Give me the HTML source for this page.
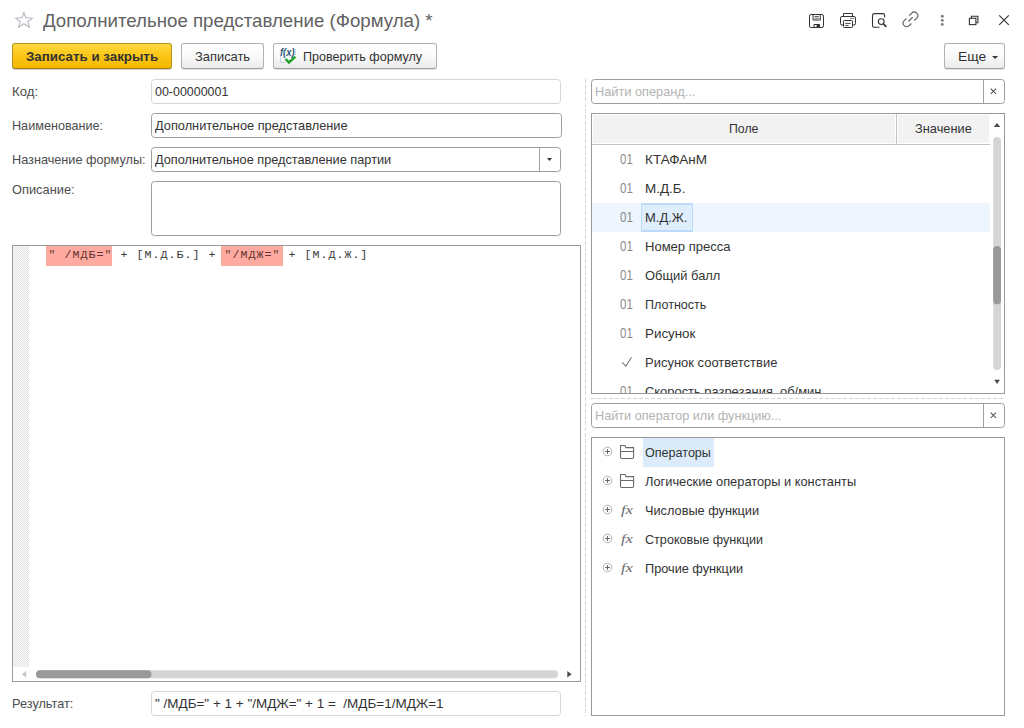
<!DOCTYPE html>
<html lang="ru">
<head>
<meta charset="utf-8">
<title>Дополнительное представление (Формула) *</title>
<style>
*{box-sizing:border-box;margin:0;padding:0}
html,body{width:1024px;height:728px;overflow:hidden;background:#fff}
body{font-family:"Liberation Sans",Arial,sans-serif;font-size:13px;color:#333;position:relative}
.abs{position:absolute}
.tx{position:absolute;white-space:pre;line-height:16px;height:16px;transform-origin:0 50%}
.btn{position:absolute;top:43px;height:26px;border:1px solid #b2b2b2;border-bottom-color:#9c9c9c;border-radius:3px;background:linear-gradient(#ffffff,#fafafa 50%,#eaeaea);box-shadow:0 1px 0.5px rgba(0,0,0,.10)}
.btn.y{background:linear-gradient(#ffd941,#fbc515 50%,#f5b700);border-color:#b8921e;border-bottom-color:#a07c14;box-shadow:0 1px 0.5px rgba(0,0,0,.18)}
.inp{position:absolute;border:1px solid #9e9e9e;border-radius:3.5px;background:#fff}
.inp.ro{border-color:#d6d6d6}
.box{position:absolute;border:1px solid #a0a0a0;background:#fff;overflow:hidden}
.mono{font-family:"Liberation Mono","Courier New",monospace}
</style>
</head>
<body>
<!-- window title -->
<svg class="abs" style="left:14px;top:10px" width="20" height="20" viewBox="0 0 20 20"><path d="M9.9 2.5 L11.8 7.5 L18.3 8.3 L13.8 11.8 L15.6 17.3 L9.9 13.7 L4.5 17.3 L6.2 11.8 L1.8 8.3 L8.1 7.5 Z" fill="none" stroke="#b3b9bf" stroke-width="1.05" stroke-linejoin="miter"/></svg>
<span class="tx" style="left:42.5px;top:13.0px;font-size:18.67px;color:#626262;transform:scaleX(1.0009)">Дополнительное представление (Формула) *</span>

<!-- window buttons -->
<svg class="abs" style="left:800px;top:4px" width="224" height="32" viewBox="0 0 224 32" fill="none" stroke="#333" stroke-width="1.1">
 <!-- save -->
 <g stroke-width="1">
  <rect x="9.5" y="10.5" width="14" height="13" rx="1.6"/>
  <path d="M13 10.5 V16 H20.3 V10.5"/>
  <path d="M14.5 12.5 H18.8 M14.5 14.2 H18.8" stroke-width="0.8"/>
  <path d="M14 23.5 V20.5 H19.6 V23.5"/>
  <rect x="16.6" y="21" width="2.6" height="2.5" fill="#333" stroke="none"/>
 </g>
 <!-- print -->
 <g stroke-width="1">
  <path d="M43.5 12.5 V9.5 H52.5 V12.5"/>
  <path d="M43.5 21 H42 Q40.5 21 40.5 19.5 V14 Q40.5 12.5 42 12.5 H54 Q55.5 12.5 55.5 14 V19.5 Q55.5 21 54 21 H52.5"/>
  <rect x="43.5" y="16.5" width="9" height="7" rx="0.8" fill="#fff"/>
  <path d="M45.3 19.4 H50.6 M45.3 21.5 H48.5 M50.2 14.5 H51.6 M52.4 14.5 H53.8" stroke-width="0.9"/>
 </g>
 <!-- preview -->
 <g>
  <path d="M84.6 13.5 V11.3 Q84.6 9.6 82.9 9.6 H74.2 Q72.5 9.6 72.5 11.3 V21.6 Q72.5 23.3 74.2 23.3 H79.5"/>
  <circle cx="81.2" cy="17.6" r="2.9"/>
  <path d="M83.4 19.9 L86.3 22.8" stroke-width="1.7"/>
 </g>
</svg>
<svg class="abs" style="left:895px;top:4px" width="129" height="32" viewBox="0 0 129 32" fill="none" stroke="#333" stroke-width="1.1">
 <!-- link -->
 <g stroke="#5a5a5a" stroke-width="1.1">
  <path d="M14.3 11.5 L16.74 9.14 A3.55 3.55 0 0 1 21.76 14.16 L19.35 16.5"/>
  <path d="M11.4 14.5 L9.14 16.54 A3.55 3.55 0 0 0 14.16 21.56 L16.3 19.5"/>
  <path d="M13.4 17.5 L17.66 13.06"/>
 </g>
 <!-- dots -->
 <g fill="#7f7f7f" stroke="none"><circle cx="47.3" cy="12.3" r="1.45"/><circle cx="47.3" cy="16.4" r="1.45"/><circle cx="47.3" cy="20.4" r="1.45"/></g>
 <!-- restore -->
 <g stroke-width="1.1"><path d="M76.4 14.1 V12.3 H82.9 V18.8 H81.1"/><rect x="74.4" y="14.3" width="6.5" height="6.3"/></g>
 <!-- close -->
 <path d="M104.2 11.3 L113.8 20.9 M113.8 11.3 L104.2 20.9" stroke-width="1.15"/>
</svg>

<!-- toolbar -->
<div class="btn y" style="left:12px;width:160px"></div><span class="tx" style="left:25.5px;top:49.0px;font-size:13.5px;color:#333;transform:scaleX(0.9873);font-weight:bold">Записать и закрыть</span>
<div class="btn" style="left:181px;width:83px"></div><span class="tx" style="left:194.5px;top:49.0px;font-size:13.5px;color:#333;transform:scaleX(0.9549)">Записать</span>
<div class="btn" style="left:273px;width:164px"></div><span class="tx" style="left:303.0px;top:49.0px;font-size:13.5px;color:#333;transform:scaleX(0.9312)">Проверить формулу</span>
<svg class="abs" style="left:279px;top:47px" width="19" height="18" viewBox="0 0 19 18">
 <path d="M1.5 9.5 V15.5 H6.5 M16.5 2.5 V8" fill="none" stroke="#9db3c8" stroke-width="1" stroke-dasharray="1 1.2"/>
 <text x="1" y="8.6" font-family="Liberation Sans, Arial, sans-serif" font-size="10" font-weight="bold" font-style="italic" fill="#2f587a" textLength="14.6" lengthAdjust="spacingAndGlyphs">f(x)</text>
 <path d="M6.6 12 L9.9 15.4 L16.4 9.6" fill="none" stroke="#22a02e" stroke-width="2.5" stroke-linecap="butt" stroke-linejoin="miter"/>
</svg>
<div class="btn" style="left:944px;width:61px"></div><span class="tx" style="left:957.9px;top:49.0px;font-size:13.5px;color:#333;transform:scaleX(1.0266)">Еще</span>
<svg class="abs" style="left:991px;top:55px" width="8" height="5" viewBox="0 0 8 5"><path d="M1 1 H7.2 L4.1 4.1 Z" fill="#3c3c3c"/></svg>

<!-- left fields -->
<span class="tx" style="left:12.0px;top:83.5px;font-size:13.5px;color:#4d4d4d;transform:scaleX(0.9768)">Код:</span><div class="inp ro" style="left:151px;top:79px;width:410px;height:25px"></div><span class="tx" style="left:154.8px;top:83.5px;font-size:13.5px;color:#333;transform:scaleX(0.9211)">00-00000001</span>
<span class="tx" style="left:12.0px;top:117.5px;font-size:13.5px;color:#4d4d4d;transform:scaleX(0.9359)">Наименование:</span><div class="inp" style="left:151px;top:113px;width:411px;height:25px"></div><span class="tx" style="left:154.5px;top:117.5px;font-size:13.5px;color:#333;transform:scaleX(0.9470)">Дополнительное представление</span>
<span class="tx" style="left:12.0px;top:151.5px;font-size:13.5px;color:#4d4d4d;transform:scaleX(0.9401)">Назначение формулы:</span><div class="inp" style="left:151px;top:147px;width:410px;height:25px"></div><span class="tx" style="left:154.5px;top:151.5px;font-size:13.5px;color:#333;transform:scaleX(0.9432)">Дополнительное представление партии</span>
<div class="abs" style="left:539px;top:148px;width:1px;height:23px;background:#a0a0a0"></div>
<svg class="abs" style="left:546px;top:157px" width="8" height="5" viewBox="0 0 8 5"><path d="M0.9 1 H6.1 L3.5 4 Z" fill="#3c3c3c"/></svg>
<span class="tx" style="left:12.0px;top:181.5px;font-size:13.5px;color:#4d4d4d;transform:scaleX(0.9503)">Описание:</span><div class="inp" style="left:151px;top:181px;width:410px;height:55px"></div>

<!-- formula editor -->
<div class="box" style="left:12px;top:245px;width:569px;height:437px;border-color:#9a9a9a">
 <svg class="abs" style="left:0;top:0" width="16" height="421"><defs><pattern id="ck" width="2" height="2" patternUnits="userSpaceOnUse"><rect width="2" height="2" fill="#fff"/><rect x="1" width="1" height="1" fill="#dfdfdf"/><rect y="1" width="1" height="1" fill="#dfdfdf"/></pattern></defs><rect width="16" height="421" fill="url(#ck)"/></svg>
 <div class="abs" style="left:33px;top:0;width:66px;height:20px;background:#ffaaa1"></div>
 <div class="abs" style="left:208px;top:0;width:62px;height:20px;background:#ffaaa1"></div>
 <div class="abs mono" style="left:35.6px;top:1.1px;height:17px;line-height:17px;font-size:11.7px;letter-spacing:0.98px;white-space:pre;color:#3a3a3a"><span style="color:#5e3230">" /МДБ="</span> + [М.Д.Б.] + <span style="color:#5e3230">"/МДЖ="</span> + [М.Д.Ж.]</div>
 <!-- h scrollbar -->
 <svg class="abs" style="left:0;top:422px" width="567" height="13" viewBox="0 0 567 13">
  <path d="M13.2 3 V9.4 L9 6.2 Z" fill="#c4c4c4"/>
  <rect x="23" y="2.2" width="522" height="8" rx="4" fill="#d5d5d5"/>
  <rect x="23" y="2.2" width="115.5" height="8" rx="4" fill="#999"/>
  <path d="M554.3 3 V9.4 L558.6 6.2 Z" fill="#4a4a4a"/>
 </svg>
</div>

<span class="tx" style="left:12.0px;top:695.5px;font-size:13.5px;color:#4d4d4d;transform:scaleX(0.9408)">Результат:</span><div class="inp ro" style="left:151px;top:691px;width:410px;height:25px"></div><span class="tx" style="left:154.5px;top:695.5px;font-size:13.5px;color:#333;transform:scaleX(0.9987)">" /МДБ=" + 1 + "/МДЖ=" + 1 =  /МДБ=1/МДЖ=1</span>

<!-- splitters -->
<div class="abs" style="left:585px;top:79px;width:1px;height:637px;background:repeating-linear-gradient(180deg,#d6d6d6 0 4px,transparent 4px 6px)"></div>
<div class="abs" style="left:591px;top:398px;width:414px;height:1px;background:repeating-linear-gradient(90deg,#d6d6d6 0 4px,transparent 4px 6px)"></div>

<!-- right: operand search -->
<div class="inp" style="left:591px;top:79px;width:414px;height:25px"></div><span class="tx" style="left:594.7px;top:83.5px;font-size:13.5px;color:#b3b3b3;transform:scaleX(0.9454)">Найти операнд...</span>
<div class="abs" style="left:983px;top:80px;width:1px;height:23px;background:#a0a0a0"></div>
<svg class="abs" style="left:989px;top:87px" width="9" height="9" viewBox="0 0 9 9"><path d="M1.7 1.6 L7.1 7 M7.1 1.6 L1.7 7" stroke="#4a4a4a" stroke-width="1.05" fill="none"/></svg>

<!-- operand table -->
<div class="box" style="left:591px;top:113px;width:414px;height:281px;border-color:#999"></div>
<div class="abs" style="left:593px;top:115px;width:302px;height:28px;background:#f2f2f2"></div><div class="abs" style="left:898px;top:115px;width:91px;height:28px;background:#f2f2f2"></div><div class="abs" style="left:592px;top:144px;width:398px;height:1px;background:#c3c3c3"></div>
<div class="abs" style="left:896px;top:114px;width:1px;height:30px;background:#c3c3c3"></div>
<span class="tx" style="left:729.2px;top:120.5px;font-size:13.5px;color:#333;transform:scaleX(0.9099)">Поле</span><span class="tx" style="left:914.7px;top:120.5px;font-size:13.5px;color:#333;transform:scaleX(0.9486)">Значение</span>
<div class="abs" style="left:592px;top:203px;width:398px;height:29px;background:#eef5fd"></div>
<div class="abs" style="left:641px;top:203px;width:52px;height:29px;background:#dfeefd;border:2px solid #bddbf8;border-width:2px 1.5px"></div>
<div class="abs" style="left:592px;top:145px;width:398px;height:248px;overflow:hidden">
<div class="abs" style="left:-592px;top:-145px;width:1024px;height:728px">
<span class="tx" style="left:620.3px;top:151.1px;font-size:14.6px;color:#8a8a8a;transform:scaleX(0.7885)">01</span><span class="tx" style="left:644.7px;top:151.5px;font-size:13.5px;color:#333;transform:scaleX(1.0018)">КТАФАнМ</span>
<span class="tx" style="left:620.3px;top:180.1px;font-size:14.6px;color:#8a8a8a;transform:scaleX(0.7885)">01</span><span class="tx" style="left:644.7px;top:180.5px;font-size:13.5px;color:#333;transform:scaleX(0.9975)">М.Д.Б.</span>
<span class="tx" style="left:620.3px;top:209.1px;font-size:14.6px;color:#8a8a8a;transform:scaleX(0.7885)">01</span><span class="tx" style="left:644.7px;top:209.5px;font-size:13.5px;color:#333;transform:scaleX(0.9612)">М.Д.Ж.</span>
<span class="tx" style="left:620.3px;top:238.1px;font-size:14.6px;color:#8a8a8a;transform:scaleX(0.7885)">01</span><span class="tx" style="left:644.7px;top:238.5px;font-size:13.5px;color:#333;transform:scaleX(0.9634)">Номер пресса</span>
<span class="tx" style="left:620.3px;top:267.1px;font-size:14.6px;color:#8a8a8a;transform:scaleX(0.7885)">01</span><span class="tx" style="left:644.7px;top:267.5px;font-size:13.5px;color:#333;transform:scaleX(0.9561)">Общий балл</span>
<span class="tx" style="left:620.3px;top:296.1px;font-size:14.6px;color:#8a8a8a;transform:scaleX(0.7885)">01</span><span class="tx" style="left:644.7px;top:296.5px;font-size:13.5px;color:#333;transform:scaleX(0.9294)">Плотность</span>
<span class="tx" style="left:620.3px;top:325.1px;font-size:14.6px;color:#8a8a8a;transform:scaleX(0.7885)">01</span><span class="tx" style="left:644.7px;top:325.5px;font-size:13.5px;color:#333;transform:scaleX(0.9898)">Рисунок</span>
<span class="tx" style="left:644.7px;top:354.5px;font-size:13.5px;color:#333;transform:scaleX(0.9612)">Рисунок соответствие</span>
<span class="tx" style="left:620.3px;top:383.1px;font-size:14.6px;color:#8a8a8a;transform:scaleX(0.7885)">01</span><span class="tx" style="left:644.7px;top:383.5px;font-size:13.5px;color:#333;transform:scaleX(0.9555)">Скорость разрезания, об/мин</span>
<svg class="abs" style="left:620px;top:355px" width="14" height="14" viewBox="0 0 14 14"><path d="M2.2 7.3 L5.9 11.2 L11.5 2.2" fill="none" stroke="#757575" stroke-width="1.1"/></svg>
</div>
</div>
<!-- v scrollbar -->
<svg class="abs" style="left:990px;top:114px" width="14" height="279" viewBox="0 0 14 279">
 <path d="M3.8 13 H10.2 L7 8.9 Z" fill="#4a4a4a"/>
 <rect x="3.2" y="23" width="7.8" height="233" rx="3.9" fill="#d5d5d5"/>
 <rect x="3.2" y="132" width="7.8" height="58.3" rx="3.9" fill="#999"/>
 <path d="M4.2 265.7 H10 L7.1 269.9 Z" fill="#4a4a4a"/>
</svg>

<!-- operator search -->
<div class="inp" style="left:591px;top:403px;width:414px;height:25px"></div><span class="tx" style="left:594.7px;top:407.5px;font-size:13.5px;color:#b3b3b3;transform:scaleX(0.9388)">Найти оператор или функцию...</span>
<div class="abs" style="left:983px;top:404px;width:1px;height:23px;background:#a0a0a0"></div>
<svg class="abs" style="left:989px;top:411px" width="9" height="9" viewBox="0 0 9 9"><path d="M1.7 1.6 L7.1 7 M7.1 1.6 L1.7 7" stroke="#4a4a4a" stroke-width="1.05" fill="none"/></svg>

<!-- operator tree -->
<div class="box" style="left:591px;top:437px;width:414px;height:279px;border-color:#999"></div>
<div class="abs" style="left:643px;top:438px;width:71px;height:29px;background:#dbebfa"></div>
<span class="tx" style="left:645.0px;top:444.5px;font-size:13.5px;color:#333;transform:scaleX(0.9308)">Операторы</span>
<span class="tx" style="left:645.0px;top:473.5px;font-size:13.5px;color:#333;transform:scaleX(0.9495)">Логические операторы и константы</span>
<span class="tx" style="left:645.0px;top:502.5px;font-size:13.5px;color:#333;transform:scaleX(0.9442)">Числовые функции</span>
<span class="tx" style="left:645.0px;top:531.5px;font-size:13.5px;color:#333;transform:scaleX(0.9334)">Строковые функции</span>
<span class="tx" style="left:645.0px;top:560.5px;font-size:13.5px;color:#333;transform:scaleX(0.9420)">Прочие функции</span>
<svg class="abs" style="left:600px;top:444px" width="40" height="16" viewBox="0 0 40 16" fill="none"><circle cx="7.5" cy="7.5" r="4.3" stroke="#b2b2b2" stroke-width="1"/><path d="M5 7.5 H10 M7.5 5 V10" stroke="#6a6a6a" stroke-width="1"/><path d="M20.5 13.2 Q20.5 14.5 21.8 14.5 H32.3 Q33.6 14.5 33.6 13.2 V3.6 H26 L25 1.5 H20.5 Z M20.5 7.5 H33.6" stroke="#6a6a6a" stroke-width="1.05"/></svg>
<svg class="abs" style="left:600px;top:473px" width="40" height="16" viewBox="0 0 40 16" fill="none"><circle cx="7.5" cy="7.5" r="4.3" stroke="#b2b2b2" stroke-width="1"/><path d="M5 7.5 H10 M7.5 5 V10" stroke="#6a6a6a" stroke-width="1"/><path d="M20.5 13.2 Q20.5 14.5 21.8 14.5 H32.3 Q33.6 14.5 33.6 13.2 V3.6 H26 L25 1.5 H20.5 Z M20.5 7.5 H33.6" stroke="#6a6a6a" stroke-width="1.05"/></svg>
<svg class="abs" style="left:600px;top:502px" width="40" height="16" viewBox="0 0 40 16" fill="none"><circle cx="7.5" cy="7.5" r="4.3" stroke="#b2b2b2" stroke-width="1"/><path d="M5 7.5 H10 M7.5 5 V10" stroke="#6a6a6a" stroke-width="1"/><text x="21" y="11.5" font-family="Liberation Serif, serif" font-style="italic" font-size="12" fill="#6a6a6a" stroke="none" textLength="12" lengthAdjust="spacingAndGlyphs">fx</text></svg>
<svg class="abs" style="left:600px;top:531px" width="40" height="16" viewBox="0 0 40 16" fill="none"><circle cx="7.5" cy="7.5" r="4.3" stroke="#b2b2b2" stroke-width="1"/><path d="M5 7.5 H10 M7.5 5 V10" stroke="#6a6a6a" stroke-width="1"/><text x="21" y="11.5" font-family="Liberation Serif, serif" font-style="italic" font-size="12" fill="#6a6a6a" stroke="none" textLength="12" lengthAdjust="spacingAndGlyphs">fx</text></svg>
<svg class="abs" style="left:600px;top:560px" width="40" height="16" viewBox="0 0 40 16" fill="none"><circle cx="7.5" cy="7.5" r="4.3" stroke="#b2b2b2" stroke-width="1"/><path d="M5 7.5 H10 M7.5 5 V10" stroke="#6a6a6a" stroke-width="1"/><text x="21" y="11.5" font-family="Liberation Serif, serif" font-style="italic" font-size="12" fill="#6a6a6a" stroke="none" textLength="12" lengthAdjust="spacingAndGlyphs">fx</text></svg>
</body>
</html>
